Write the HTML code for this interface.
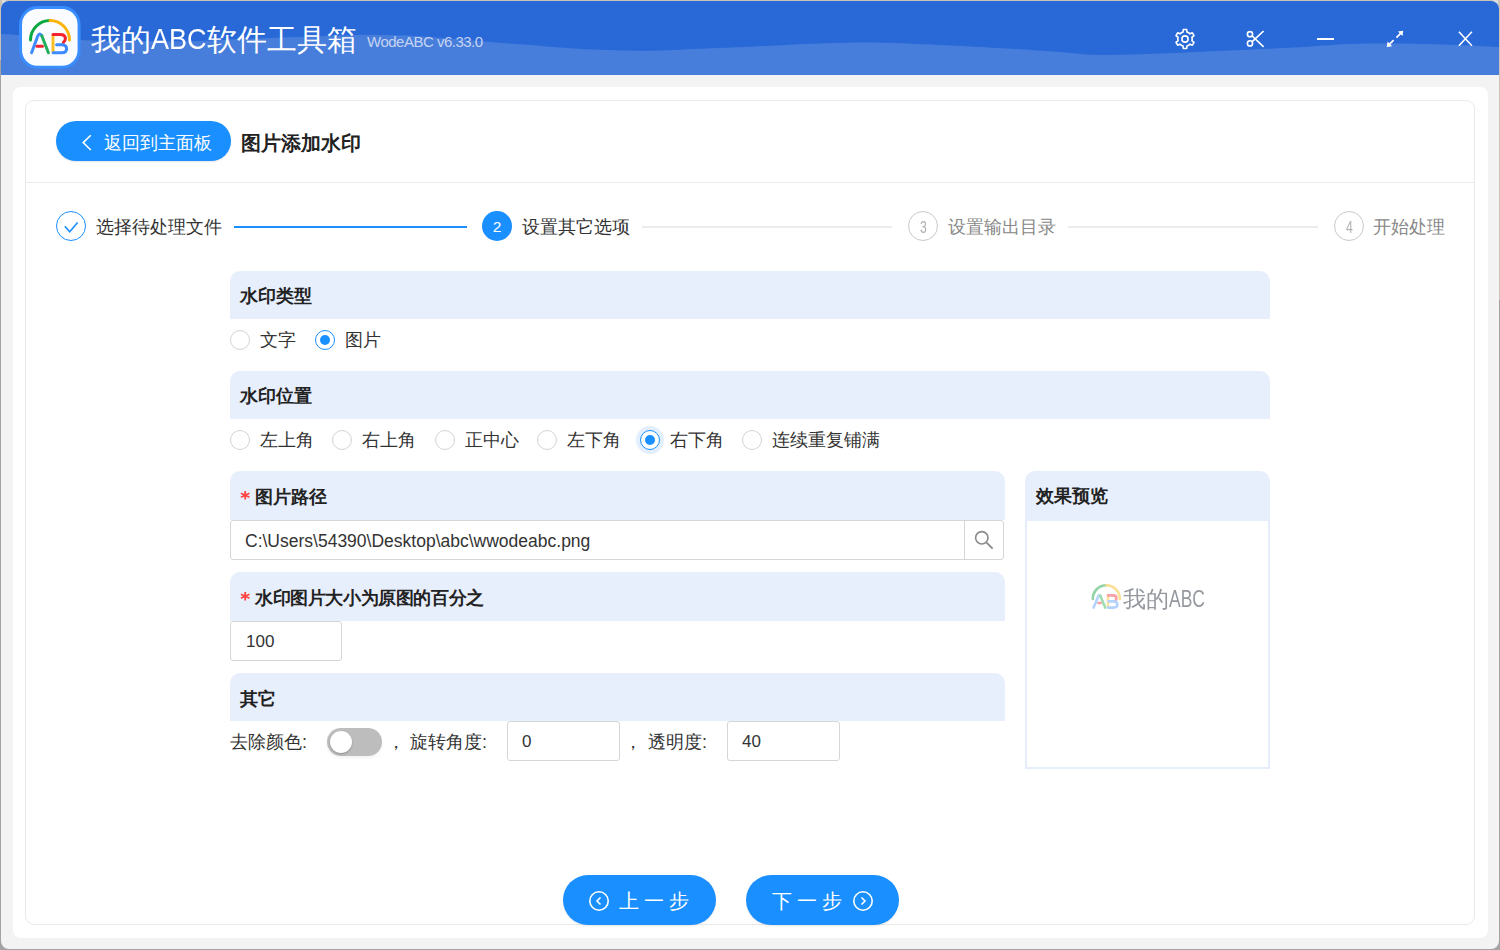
<!DOCTYPE html>
<html><head><meta charset="utf-8">
<style>
*{box-sizing:border-box;margin:0;padding:0}
html,body{width:1500px;height:950px;overflow:hidden;background:#a3a3a3;font-family:"Liberation Sans",sans-serif;color:#333}
.abs{position:absolute}
#win{position:absolute;left:1px;top:1px;width:1498px;height:948px;border-radius:8px;overflow:hidden;background:#f3f3f3}
#hdr{position:absolute;left:0;top:0;width:1498px;height:74px;background:#2868d7}
.t{position:absolute;white-space:nowrap;line-height:1}
.card{position:absolute;left:12px;top:86px;width:1475px;height:851px;background:#fff;border-radius:8px}
.inner{position:absolute;left:24px;top:99px;width:1450px;height:825px;border:1px solid #e9e9e9;border-radius:9px;background:#fff}
.btn{position:absolute;background:#1a8fff;border-radius:30px;box-shadow:0 1px 2px rgba(0,0,0,.10)}
.sh{position:absolute;background:#e8effc;border-radius:10px 10px 0 0}
.shT{position:absolute;font-weight:bold;font-size:18px;color:#222;white-space:nowrap;line-height:1}
.radio{position:absolute;width:20px;height:20px;border:1px solid #d4d4d4;border-radius:50%;background:#fff}
.radio.on{border-color:#1a8fff}
.radio.on::after{content:"";position:absolute;left:4px;top:4px;width:10px;height:10px;border-radius:50%;background:#1a8fff}
.lbl{position:absolute;font-size:18px;color:#333;white-space:nowrap;line-height:1}
.inp{position:absolute;border:1px solid #d6d6d6;border-radius:3px;background:#fff}
.stepc{position:absolute;width:30px;height:30px;border-radius:50%}
</style></head><body>
<div class="abs" style="left:0;top:0;width:1500px;height:2px;background:#cbc3b6"></div><div class="abs" style="left:0;top:0;width:6px;height:5px;background:#dcdcdc"></div><div class="abs" style="left:1493px;top:0;width:7px;height:7px;background:#dcdcdc"></div><div class="abs" style="left:0;top:0;width:2px;height:60px;background:#cbc3b6"></div><div class="abs" style="left:1498px;top:0;width:2px;height:300px;background:#cbc3b6"></div>
<div id="win">
  <div id="hdr">
    <svg class="abs" style="left:0;top:0" width="1498" height="74" viewBox="0 0 1498 74">
      <path d="M-1.0,33.0 C5.3,33.3 4.0,33.0 17.0,34.0 C30.0,35.0 58.7,38.0 77.0,39.0 C95.3,40.0 111.7,39.8 127.0,40.0 C142.3,40.2 157.0,40.5 169.0,40.5 C181.0,40.5 185.7,40.5 199.0,40.0 C212.3,39.5 232.3,38.4 249.0,37.8 C265.7,37.1 284.0,36.6 299.0,36.1 C314.0,35.6 326.5,35.0 339.0,34.6 C351.5,34.2 360.7,33.7 374.0,33.8 C387.3,33.9 403.2,34.3 419.0,35.3 C434.8,36.2 452.3,38.2 469.0,39.5 C485.7,40.8 502.3,42.0 519.0,43.3 C535.7,44.6 555.7,46.4 569.0,47.3 C582.3,48.2 585.7,48.3 599.0,48.7 C612.3,49.1 632.3,49.9 649.0,49.8 C665.7,49.6 682.3,48.5 699.0,47.8 C715.7,47.1 732.3,46.5 749.0,45.7 C765.7,45.0 782.3,44.0 799.0,43.3 C815.7,42.6 832.3,41.9 849.0,41.7 C865.7,41.5 878.2,41.6 899.0,42.3 C919.8,43.0 949.0,44.4 974.0,45.7 C999.0,47.0 1028.2,48.9 1049.0,50.3 C1069.8,51.7 1080.7,53.6 1099.0,54.0 C1117.3,54.4 1138.2,53.3 1159.0,52.6 C1179.8,51.9 1200.7,50.9 1224.0,49.8 C1247.3,48.7 1278.2,47.3 1299.0,46.2 C1319.8,45.1 1332.3,43.6 1349.0,43.0 C1365.7,42.4 1382.3,42.4 1399.0,42.5 C1415.7,42.6 1432.3,43.1 1449.0,43.7 C1465.7,44.3 1482.3,45.3 1499.0,46.0 L1499,74 L-1,74 Z" fill="#477edb"/>
    </svg>
    <!-- logo -->
    <svg class="abs" style="left:17px;top:4px" width="66" height="68" viewBox="18 5 66 68">
      <rect x="20.5" y="7.5" width="58.6" height="59.7" rx="17" ry="17" fill="#fbfcff" stroke="#3a8dff" stroke-width="3"/>
      <path d="M30.5,40 A19.5,19.5 0 0 1 50,20.5" fill="none" stroke="#0aa83e" stroke-width="3" stroke-linecap="round"/>
      <path d="M50,20.5 A19.5,19.5 0 0 1 69.5,40" fill="none" stroke="#fbb40d" stroke-width="3" stroke-linecap="round"/>
      <path d="M31.6,52.8 L37.6,36.4 Q39.6,32 41.8,35.8" fill="none" stroke="#3d8bff" stroke-width="3" stroke-linecap="round"/>
      <path d="M41.8,35.8 L48.4,52.8" fill="none" stroke="#22b05a" stroke-width="3" stroke-linecap="round"/>
      <path d="M37,46.2 L42.4,46.2" fill="none" stroke="#f5222d" stroke-width="3" stroke-linecap="round"/>
      <path d="M53,35 L53,52.4" fill="none" stroke="#fbbf24" stroke-width="3"/>
      <path d="M53,34.4 L60,34.4 Q65.4,34.4 65.4,38.6 Q65.4,41.2 63.4,42.4" fill="none" stroke="#f5222d" stroke-width="3" stroke-linecap="round"/>
      <path d="M56.6,44.8 L61.6,44.8 Q66.6,44.8 66.6,48.8 Q66.6,52.8 61.6,52.8 L53.2,52.8" fill="none" stroke="#3d8bff" stroke-width="3" stroke-linecap="round"/>
    </svg>
    <div class="t" style="left:90px;top:24px;font-size:30px;color:#fff">我的</div><div class="t" style="left:150px;top:23px;font-size:30px;color:#fff;transform:scaleX(0.9);transform-origin:0 0">ABC</div><div class="t" style="left:206px;top:24px;font-size:30px;color:#fff">软件工具箱</div>
    <div class="t" style="left:366px;top:32.5px;font-size:15px;letter-spacing:-0.5px;color:#c6d3f3">WodeABC v6.33.0</div>
    <!-- window icons -->
    <svg class="abs" style="left:1173px;top:27px" width="22" height="22" viewBox="0 0 22 22">
      <path d="M18.20,11.00 L17.99,9.26 L20.02,7.72 L18.35,4.83 L16.00,5.82 L14.60,4.76 L12.98,4.08 L12.67,1.55 L9.33,1.55 L9.02,4.08 L7.40,4.76 L6.00,5.82 L3.65,4.83 L1.98,7.72 L4.01,9.26 L3.80,11.00 L4.01,12.74 L1.98,14.28 L3.65,17.17 L6.00,16.18 L7.40,17.24 L9.02,17.92 L9.33,20.45 L12.67,20.45 L12.98,17.92 L14.60,17.24 L16.00,16.18 L18.35,17.17 L20.02,14.28 L17.99,12.74 Z" fill="none" stroke="#fff" stroke-width="1.6" stroke-linejoin="round"/>
      <circle cx="11" cy="11" r="3.1" fill="none" stroke="#fff" stroke-width="1.6"/>
    </svg>
    <svg class="abs" style="left:1243px;top:28px" width="22" height="20" viewBox="0 0 22 20">
      <circle cx="6" cy="5.2" r="2.6" fill="none" stroke="#fff" stroke-width="1.6"/>
      <circle cx="6" cy="14.4" r="2.6" fill="none" stroke="#fff" stroke-width="1.6"/>
      <path d="M8.2,12.6 L19.6,2 M8.2,7 L19.6,17.8" stroke="#fff" stroke-width="1.7"/>
    </svg>
    <div class="abs" style="left:1316px;top:37px;width:17px;height:2px;background:#fff"></div>
    <svg class="abs" style="left:1384px;top:28px" width="20" height="20" viewBox="0 0 20 20">
      <path d="M3.6,16.2 L8.6,11.2 M11.4,8.6 L16.4,3.6" stroke="#fff" stroke-width="1.7"/>
      <path d="M1.8,17.9 L2.5,12.6 L7.1,17.2 Z M18.2,1.8 L17.5,7.1 L12.9,2.5 Z" fill="#fff"/>
    </svg>
    <svg class="abs" style="left:1455px;top:28px" width="18" height="18" viewBox="0 0 18 18">
      <path d="M2.9,2.7 L15.9,16.7 M15.9,2.7 L2.9,16.7" stroke="#fff" stroke-width="1.6"/>
    </svg>
  </div>

  <div class="card"></div>
  <div class="inner"></div>
</div>

<!-- content: page coordinates -->
<div class="btn" style="left:56px;top:121px;width:175px;height:40px"></div>
<svg class="abs" style="left:80px;top:133px" width="14" height="18" viewBox="0 0 14 18"><path d="M10.8,2.2 L3.2,9.6 L10.8,17" fill="none" stroke="#fff" stroke-width="1.6"/></svg>
<div class="t" style="left:104px;top:134px;font-size:18px;color:#fff">返回到主面板</div>
<div class="t" style="left:241px;top:133px;font-size:20px;font-weight:bold;color:#222">图片添加水印</div>
<div class="abs" style="left:25px;top:182px;width:1450px;height:1px;background:#ebebeb"></div>

<!-- steps -->
<div class="stepc" style="left:56px;top:211px;border:1px solid #1a8fff"></div>
<svg class="abs" style="left:62px;top:218px" width="18" height="16" viewBox="0 0 18 16"><path d="M2.8,8.2 L7.7,13.8 L15.6,4.4" fill="none" stroke="#1a8fff" stroke-width="1.6"/></svg>
<div class="t" style="left:96px;top:218px;font-size:18px;color:#333">选择待处理文件</div>
<div class="abs" style="left:234px;top:226px;width:233px;height:2px;background:#1a8fff"></div>
<div class="stepc" style="left:482px;top:211px;background:#1a8fff"></div>
<div class="t" style="left:482px;top:219px;width:30px;text-align:center;font-size:15.5px;color:#fff">2</div>
<div class="t" style="left:522px;top:218px;font-size:18px;color:#333">设置其它选项</div>
<div class="abs" style="left:642px;top:226px;width:250px;height:2px;background:#ececec"></div>
<div class="stepc" style="left:908px;top:211px;border:1px solid #c9c9c9"></div>
<div class="t" style="left:919.5px;top:218.5px;font-size:16.5px;color:#b0b0b0;transform:scaleX(0.74);transform-origin:0 0">3</div>
<div class="t" style="left:948px;top:218px;font-size:18px;color:#888">设置输出目录</div>
<div class="abs" style="left:1068px;top:226px;width:250px;height:2px;background:#ececec"></div>
<div class="stepc" style="left:1334px;top:211px;border:1px solid #c9c9c9"></div>
<div class="t" style="left:1345.5px;top:218.5px;font-size:16.5px;color:#b0b0b0;transform:scaleX(0.74);transform-origin:0 0">4</div>
<div class="t" style="left:1373px;top:218px;font-size:18px;color:#888">开始处理</div>

<!-- section 1 -->
<div class="sh" style="left:230px;top:271px;width:1040px;height:48px"></div>
<div class="shT" style="left:240px;top:287px">水印类型</div>
<div class="radio" style="left:230px;top:330px"></div>
<div class="lbl" style="left:260px;top:331px">文字</div>
<div class="radio on" style="left:315px;top:330px"></div>
<div class="lbl" style="left:345px;top:331px">图片</div>

<!-- section 2 -->
<div class="sh" style="left:230px;top:371px;width:1040px;height:48px"></div>
<div class="shT" style="left:240px;top:387px">水印位置</div>
<div class="radio" style="left:230px;top:430px"></div><div class="lbl" style="left:260px;top:431px">左上角</div>
<div class="radio" style="left:332px;top:430px"></div><div class="lbl" style="left:362px;top:431px">右上角</div>
<div class="radio" style="left:435px;top:430px"></div><div class="lbl" style="left:465px;top:431px">正中心</div>
<div class="radio" style="left:537px;top:430px"></div><div class="lbl" style="left:567px;top:431px">左下角</div>
<div class="abs" style="left:636px;top:426px;width:28px;height:28px;border-radius:50%;background:#e3efff"></div>
<div class="radio on" style="left:640px;top:430px"></div><div class="lbl" style="left:670px;top:431px">右下角</div>
<div class="radio" style="left:742px;top:430px"></div><div class="lbl" style="left:772px;top:431px">连续重复铺满</div>

<!-- section 3 path -->
<div class="sh" style="left:230px;top:471px;width:775px;height:49px"></div>
<svg class="abs" style="left:239px;top:489px" width="12" height="12" viewBox="0 0 12 12"><path d="M6.2,1.9 L6.2,10.6 M1.9,4.3 L10.5,8.2 M1.9,8.2 L10.5,4.3" stroke="#ff4343" stroke-width="1.8"/></svg>
<div class="shT" style="left:255px;top:488px">图片路径</div>
<div class="inp" style="left:230px;top:520px;width:774px;height:40px"></div>
<div class="abs" style="left:964px;top:521px;width:1px;height:38px;background:#d6d6d6"></div>
<svg class="abs" style="left:972px;top:528px" width="24" height="24" viewBox="0 0 24 24"><circle cx="9.8" cy="9.8" r="6.2" fill="none" stroke="#8a8a8a" stroke-width="1.6"/><path d="M14.6,14.6 L20.6,20.6" stroke="#8a8a8a" stroke-width="1.8"/></svg>
<div class="t" style="left:245px;top:533px;font-size:17.5px;color:#333">C:\Users\54390\Desktop\abc\wwodeabc.png</div>

<!-- section 4 percent -->
<div class="sh" style="left:230px;top:572px;width:775px;height:49px"></div>
<svg class="abs" style="left:239px;top:590px" width="12" height="12" viewBox="0 0 12 12"><path d="M6.2,1.9 L6.2,10.6 M1.9,4.3 L10.5,8.2 M1.9,8.2 L10.5,4.3" stroke="#ff4343" stroke-width="1.8"/></svg>
<div class="shT" style="left:255px;top:589px;letter-spacing:-0.4px">水印图片大小为原图的百分之</div>
<div class="inp" style="left:230px;top:621px;width:112px;height:40px"></div>
<div class="t" style="left:246px;top:633px;font-size:17px;color:#333">100</div>

<!-- section 5 other -->
<div class="sh" style="left:230px;top:673px;width:775px;height:48px"></div>
<div class="shT" style="left:240px;top:690px">其它</div>
<div class="lbl" style="left:230px;top:733px">去除颜色:</div>
<div class="abs" style="left:327px;top:728px;width:55px;height:28px;border-radius:14px;background:#bdbdbd;box-shadow:0 2px 3px rgba(0,0,0,.05)"></div>
<div class="abs" style="left:330px;top:731px;width:22px;height:22px;border-radius:50%;background:#fff;box-shadow:0 1px 2px rgba(0,0,0,.25)"></div>
<div class="lbl" style="left:387px;top:733px">，</div><div class="lbl" style="left:410px;top:733px">旋转角度:</div>
<div class="inp" style="left:507px;top:721px;width:113px;height:40px"></div>
<div class="t" style="left:522px;top:733px;font-size:17px;color:#333">0</div>
<div class="lbl" style="left:624px;top:733px">，</div><div class="lbl" style="left:648px;top:733px">透明度:</div>
<div class="inp" style="left:727px;top:721px;width:113px;height:40px"></div>
<div class="t" style="left:742px;top:733px;font-size:17px;color:#333">40</div>

<!-- preview -->
<div class="sh" style="left:1025px;top:471px;width:245px;height:50px"></div>
<div class="shT" style="left:1036px;top:487px">效果预览</div>
<div class="abs" style="left:1025px;top:521px;width:245px;height:248px;border:2px solid #e6eefb;border-top:none;background:#fff"></div>
<svg class="abs" style="left:1090px;top:580px;filter:blur(0.3px)" width="34" height="32" viewBox="1090 580 34 32">
  <path d="M1092.8,599 A13.6,13.6 0 0 1 1106.4,585.2" fill="none" stroke="#93d3a6" stroke-width="2.6" stroke-linecap="round"/>
  <path d="M1106.4,585.2 A13.6,13.6 0 0 1 1119.8,599" fill="none" stroke="#fbdf92" stroke-width="2.6" stroke-linecap="round"/>
  <path d="M1093.6,607.6 L1098.4,596.2 Q1099.2,594.8 1100.2,595.6" fill="none" stroke="#b3d3ff" stroke-width="2.6" stroke-linecap="round"/>
  <path d="M1100.2,595.6 L1105.2,607.6" fill="none" stroke="#9fdcb0" stroke-width="2.6" stroke-linecap="round"/>
  <path d="M1097.3,603 L1101.8,603" fill="none" stroke="#f9a0a4" stroke-width="2.4"/>
  <path d="M1108,595.5 L1108,607.6" fill="none" stroke="#fbe09a" stroke-width="2.6"/>
  <path d="M1108,595.4 L1113.2,595.4 Q1116.4,595.4 1116.4,598.2 Q1116.4,600.6 1114.4,601.2" fill="none" stroke="#f9a0a4" stroke-width="2.6" stroke-linecap="round"/>
  <path d="M1108.6,601.4 L1113.6,601.4 Q1117.4,601.4 1117.4,604.6 Q1117.4,607.6 1113.6,607.6 L1108,607.6" fill="none" stroke="#b3d3ff" stroke-width="2.6" stroke-linecap="round"/>
</svg>
<div class="t" style="left:1123px;top:587.5px;font-size:23px;color:#94989f;filter:blur(0.35px)">我的</div>
<div class="t" style="left:1169px;top:588px;font-size:23px;color:#94989f;transform:scaleX(0.76);transform-origin:0 0;filter:blur(0.3px)">ABC</div>

<!-- bottom buttons -->
<div class="btn" style="left:563px;top:875px;width:153px;height:50px"></div>
<svg class="abs" style="left:588px;top:890px" width="22" height="22" viewBox="0 0 22 22"><circle cx="11" cy="11" r="9.2" fill="none" stroke="#fff" stroke-width="1.6"/><path d="M12.5,7.5 L9,11 L12.5,14.5" fill="none" stroke="#fff" stroke-width="1.6"/></svg>
<div class="t" style="left:619px;top:891px;font-size:20px;color:#fff;letter-spacing:5px">上一步</div>
<div class="btn" style="left:746px;top:875px;width:153px;height:50px"></div>
<div class="t" style="left:772px;top:891px;font-size:20px;color:#fff;letter-spacing:5px">下一步</div>
<svg class="abs" style="left:852px;top:890px" width="22" height="22" viewBox="0 0 22 22"><circle cx="11" cy="11" r="9.2" fill="none" stroke="#fff" stroke-width="1.6"/><path d="M9.5,7.5 L13,11 L9.5,14.5" fill="none" stroke="#fff" stroke-width="1.6"/></svg>
</body></html>
